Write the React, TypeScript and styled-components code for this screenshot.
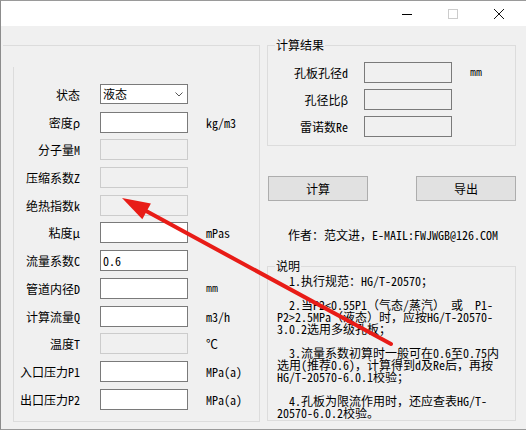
import React from 'react'
import styled, { createGlobalStyle } from 'styled-components'

const FONT = `"Noto Sans Mono CJK SC", "Liberation Mono", "Noto Sans CJK SC", monospace`

const Global = createGlobalStyle`
  html, body { margin: 0; padding: 0; background: #fff; }
  body {
    font-family: ${FONT};
    font-size: 12px;
    color: #000;
    font-variant-ligatures: none;
  }
  * { box-sizing: border-box; }
`

const Window = styled.div`
  position: relative;
  width: 526px;
  height: 430px;
  display: flex;
  flex-direction: column;
  border-left: 1px solid #8c8c8c;
  border-top: 1px solid #9a9a9a;
  border-bottom: 1px solid #9a9a9a;
  overflow: hidden;
`

const TitleBar = styled.div`
  height: 25px;
  background: #fff;
  display: flex;
  justify-content: flex-end;
  align-items: center;
  flex-shrink: 0;
  padding-right: 4px;
`

const Ctl = styled.div<{ $w: number }>`
  width: ${p => p.$w}px;
  height: 25px;
  display: flex;
  align-items: center;
  justify-content: center;
`

const Client = styled.div`
  flex: 1;
  background: #f0f0f0;
  display: flex;
  align-items: flex-start;
`

const LeftFrame = styled.div`
  margin: 19px 0 0 2px;
  width: 257px;
  height: 377px;
  border-top: 1px solid #dcdcdc;
  border-right: 1px solid #dcdcdc;
  display: flex;
  flex-direction: column;
  padding: 21px 0 0 10px;
`

const InputPanel = styled.div`
  flex: 1;
  border-left: 1px solid #dcdcdc;
  border-bottom: 1px solid #dcdcdc;
  padding-top: 17px;
`

const Row = styled.div<{ $h: number }>`
  height: ${p => p.$h}px;
  display: flex;
  align-items: flex-start;
`

const Label = styled.div<{ $w: number }>`
  width: ${p => p.$w}px;
  text-align: right;
  line-height: 21px;
  white-space: nowrap;
`

const Field = styled.div<{ $gap: number; $off?: boolean; $ro?: boolean }>`
  margin-left: ${p => p.$gap}px;
  width: 88px;
  height: 21px;
  border: 1px solid ${p => (p.$off ? '#cccccc' : '#7a7a7a')};
  background: ${p => (p.$off || p.$ro ? '#f0f0f0' : '#fff')};
  padding-left: 2px;
  line-height: 19px;
`

const Select = styled.div`
  margin-left: 20px;
  width: 88px;
  height: 20px;
  border: 1px solid #7a7a7a;
  background: #fff;
  display: flex;
  align-items: center;
  justify-content: space-between;
  padding: 0 4px 0 2px;
  line-height: 18px;
`

const Unit = styled.div<{ $plain?: boolean }>`
  margin-left: 18px;
  line-height: 21px;
  white-space: nowrap;
  color: #000;
  ${p => (p.$plain ? `font-family: "DejaVu Sans Mono", monospace; font-size: 10px;` : '')}
`

const RightCol = styled.div`
  margin-left: 7px;
  width: 249px;
  display: flex;
  flex-direction: column;
`

const Group = styled.fieldset<{ $h: number; $top: number }>`
  margin: ${p => p.$top}px 0 0 0;
  padding: 0;
  height: ${p => p.$h}px;
  border: 1px solid #dcdcdc;
  min-width: 0;
`

const Legend = styled.legend`
  margin-left: 7px;
  padding: 0 1px;
  line-height: 12px;
`

const ResultRows = styled.div`
  padding-top: 11px;
`

const Buttons = styled.div`
  margin-top: 30px;
  display: flex;
  justify-content: space-between;
  padding: 0 0 0 1px;
`

const Button = styled.div`
  width: 100px;
  height: 25px;
  background: #e1e1e1;
  border: 1px solid #adadad;
  display: flex;
  align-items: center;
  justify-content: center;
`

const Author = styled.div`
  margin-top: 27px;
  padding-left: 21px;
  line-height: 14px;
  white-space: nowrap;
`

const Notes = styled.div`
  padding: 0 0 0 9px;
  margin-top: 3px;
  white-space: pre;
  line-height: 12px;
`

const Arrow = styled.svg`
  position: absolute;
  left: 0;
  top: 0;
  pointer-events: none;
`

const leftRows: { label: string; unit?: string; value?: string; off?: boolean; select?: boolean }[] = [
  { label: '状态', select: true },
  { label: '密度ρ', unit: 'kg/m3' },
  { label: '分子量M', off: true },
  { label: '压缩系数Z', off: true },
  { label: '绝热指数k', off: true },
  { label: '粘度μ', unit: 'mPas' },
  { label: '流量系数C', value: '0.6' },
  { label: '管道内径D', unit: 'mm' },
  { label: '计算流量Q', unit: 'm3/h' },
  { label: '温度T', unit: '℃', off: true },
  { label: '入口压力P1', unit: 'MPa(a)' },
  { label: '出口压力P2', unit: 'MPa(a)' },
]

const results = [
  { label: '孔板孔径d', unit: 'mm' },
  { label: '孔径比β' },
  { label: '雷诺数Re' },
]

const notes = [
  '  1.执行规范：HG/T-20570；',
  '',
  '  2.当P2<0.55P1（气态/蒸汽） 或  P1-',
  'P2>2.5MPa（液态）时，应按HG/T-20570-',
  '3.0.2选用多级孔板；',
  '',
  '  3.流量系数初算时一般可在0.6至0.75内',
  '选用(推荐0.6)，计算得到d及Re后，再按',
  'HG/T-20570-6.0.1校验；',
  '',
  '  4.孔板为限流作用时，还应查表HG/T-',
  '20570-6.0.2校验。',
].join('\n')

export default function App() {
  // arrow: tip at (121,197), tail at (390,343)
  const tip = [121, 197]
  const tail = [390, 343]
  const dx = tail[0] - tip[0]
  const dy = tail[1] - tip[1]
  const len = Math.hypot(dx, dy)
  const ux = dx / len
  const uy = dy / len
  const back = [tip[0] + ux * 28, tip[1] + uy * 28]
  const c1 = [back[0] - uy * 9, back[1] + ux * 9]
  const c2 = [back[0] + uy * 9, back[1] - ux * 9]

  return (
    <>
      <Global />
      <Window>
        <TitleBar>
          <Ctl $w={46}>
            <svg width="10" height="10"><line x1="0" y1="5.5" x2="10" y2="5.5" stroke="#000" /></svg>
          </Ctl>
          <Ctl $w={46}>
            <svg width="10" height="10"><rect x="0.5" y="0.5" width="9" height="9" fill="none" stroke="#cccccc" /></svg>
          </Ctl>
          <Ctl $w={46}>
            <svg width="10" height="10">
              <path d="M0 0 L10 10 M10 0 L0 10" stroke="#111" strokeWidth="1" />
            </svg>
          </Ctl>
        </TitleBar>
        <Client>
          <LeftFrame>
            <InputPanel>
              {leftRows.map(r => (
                <Row key={r.label} $h={27.7}>
                  <Label $w={66}>{r.label}</Label>
                  {r.select ? (
                    <Select>
                      <span>液态</span>
                      <svg width="8" height="5"><path d="M0.5 0.5 L4 4 L7.5 0.5" fill="none" stroke="#555" /></svg>
                    </Select>
                  ) : (
                    <Field $gap={20} $off={r.off}>{r.value}</Field>
                  )}
                  {r.unit && <Unit $plain={r.unit === 'mm'}>{r.unit}</Unit>}
                </Row>
              ))}
            </InputPanel>
          </LeftFrame>
          <RightCol>
            <Group $h={107} $top={13}>
              <Legend>计算结果</Legend>
              <ResultRows>
                {results.map(r => (
                  <Row key={r.label} $h={27}>
                    <Label $w={80}>{r.label}</Label>
                    <Field $gap={16} $ro />
                    {r.unit && <Unit $plain>{r.unit}</Unit>}
                  </Row>
                ))}
              </ResultRows>
            </Group>
            <Buttons>
              <Button>计算</Button>
              <Button>导出</Button>
            </Buttons>
            <Author>作者：范文进，E-MAIL:FWJWGB@126.COM</Author>
            <Group $h={161} $top={18}>
              <Legend>说明</Legend>
              <Notes>{notes}</Notes>
            </Group>
          </RightCol>
        </Client>
        <Arrow width="526" height="430">
          <line x1={back[0]} y1={back[1]} x2={tail[0]} y2={tail[1]} stroke="#e81c17" strokeWidth="4" strokeLinecap="round" />
          <polygon points={`${tip[0]},${tip[1]} ${c1[0]},${c1[1]} ${c2[0]},${c2[1]}`} fill="#e81c17" />
        </Arrow>
      </Window>
    </>
  )
}
